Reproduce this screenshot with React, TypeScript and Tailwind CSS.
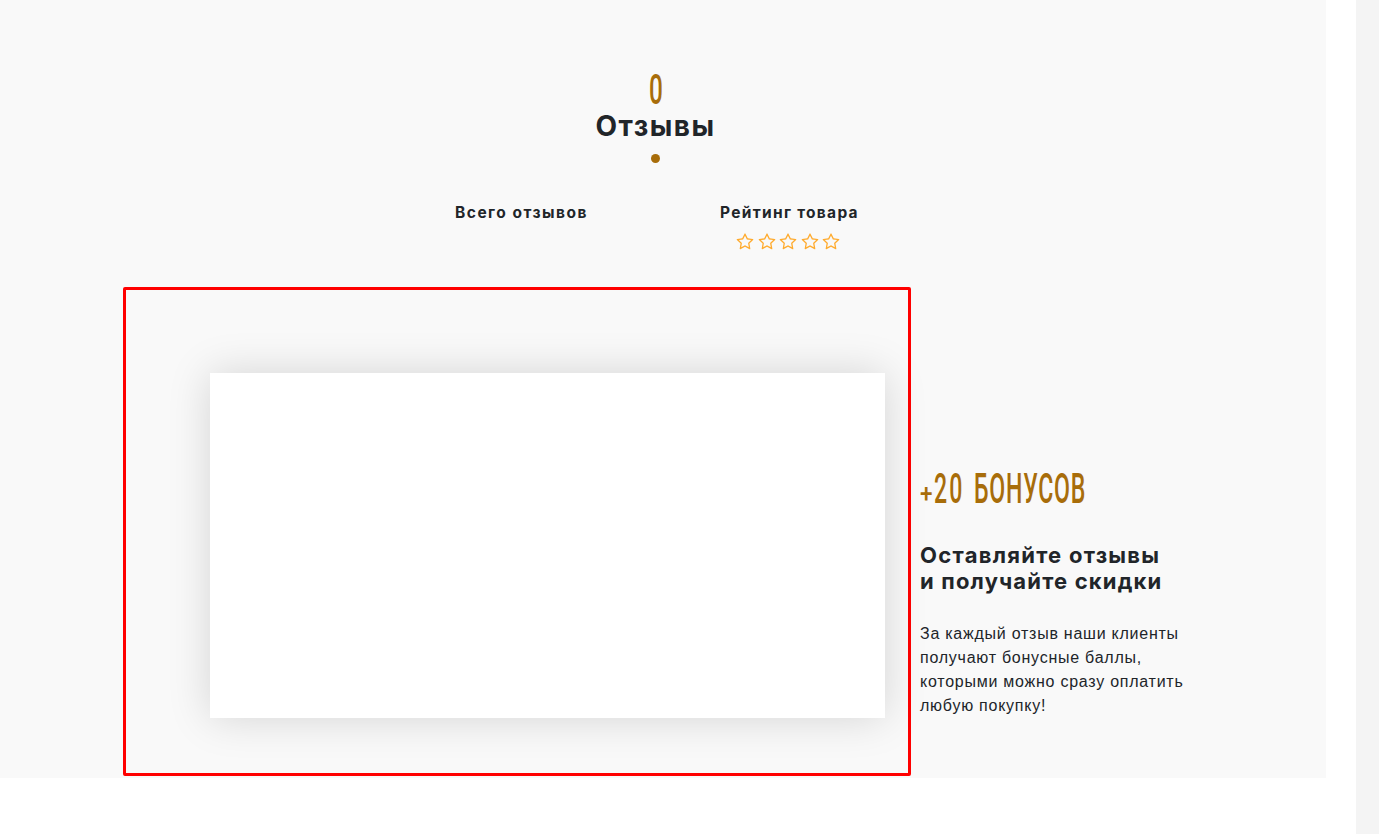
const STAR =
  "M1201 1004l306-297-422-62-189-382-189 382-422 62 306 297-73 421 378-199 377 199zm527-357q0 22-26 48l-363 354 86 500q1 7 1 20 0 50-41 50-19 0-40-12l-449-236-449 236q-22 12-40 12-21 0-31.500-14.500t-10.500-35.500q0-6 2-20l86-500-364-354q-25-27-25-48 0-37 56-46l502-73 225-455q19-41 49-41t49 41l225 455 502 73q56 9 56 46z";

function Stars() {
  return (
    <div className="ml-4 mt-[11px] flex gap-[3.5px]">
      {[1, 2, 3, 4, 5].map((n) => (
        <svg key={n} viewBox="0 0 1792 1792" className="h-[18px] w-[18px] shrink-0 fill-[#ffab2e]">
          <path d={STAR} />
        </svg>
      ))}
    </div>
  );
}

function Heading() {
  return (
    <header className="flex w-[1311px] flex-col items-center pt-[70px]">
      <span className="h-[39px] origin-center scale-x-[0.58] font-[Roboto,sans-serif] text-[42px] leading-10 font-medium text-[#a86d0a]">0</span>
      <h2 className="h-[34px] whitespace-nowrap font-[Inter,sans-serif] text-[28px] leading-[34px] font-bold tracking-[1.5px]">Отзывы</h2>
      <span className="mt-[11px] h-[9px] w-[9px] rounded-full bg-[#a86d0a]" />
    </header>
  );
}

function Bonus() {
  return (
    <aside className="ml-[9px] flex-1 pt-[182px]">
      <div className="flex h-10 font-[Roboto,sans-serif] text-[42px] leading-10 font-medium text-[#a86d0a]">
        <span className="block w-[14px] origin-left scale-x-[0.9] pt-[5px] text-[25px]">+</span>
        <span className="block w-[40px] origin-left scale-x-[0.55] tracking-[4px]">20</span>
        <span className="block origin-left scale-x-[0.55] tracking-[1.4px]">БОНУСОВ</span>
      </div>
      <h3 className="mt-[33px] whitespace-nowrap font-[Inter,sans-serif] text-[22px] leading-[26px] font-bold tracking-[1.27px]">
        Оставляйте отзывы
        <br />
        <span className="tracking-[1.18px]">и получайте скидки</span>
      </h3>
      <p className="mt-[28px] whitespace-nowrap font-['Liberation_Sans',sans-serif] text-base leading-6 tracking-[0.75px]">
        За каждый отзыв наши клиенты
        <br />
        получают бонусные баллы,
        <br />
        которыми можно сразу оплатить
        <br />
        любую покупку!
      </p>
    </aside>
  );
}

export default function App() {
  return (
    <div className="flex h-[834px] w-[1379px] overflow-hidden bg-white text-[#212529]">
      <section className="h-[778px] w-[1326px] bg-[#f9f9f9]">
        <Heading />
        <div className="flex h-[124px] pl-[455px] pt-[41px] font-[Inter,sans-serif] text-[15.5px] leading-[18px] font-bold">
          <div className="w-[265px] whitespace-nowrap">
            <span className="tracking-[1.5px]">Всего отзывов</span>
          </div>
          <div className="whitespace-nowrap">
            <span className="block tracking-[1.3px]">Рейтинг товара</span>
            <Stars />
          </div>
        </div>
        <div className="flex pl-[123px]">
          <div className="h-[489px] w-[788px] shrink-0 rounded-[2px] border-[3px] border-[#ff0000] pl-[84px] pt-[83px]">
            <div className="h-[345px] w-[675px] bg-white shadow-[0_0_40px_rgba(0,0,0,0.15)]" />
          </div>
          <Bonus />
        </div>
      </section>
      <div className="w-[30px]" />
      <div className="flex-1 bg-[#f4f4f4]" />
    </div>
  );
}
